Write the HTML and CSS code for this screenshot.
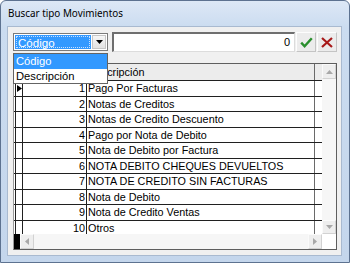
FILE: index.html
```html
<!DOCTYPE html>
<html lang="es">
<head>
<meta charset="utf-8">
<title>Buscar tipo Movimientos</title>
<link rel="stylesheet" href="styles.css">
</head>
<body>
<div class="window">
  <div class="titlebar">Buscar tipo Movimientos</div>
  <div class="client">
    <div class="toolbar">
      <div class="combo">
        <div class="combo-value"><span class="focus">Código</span></div>
        <div class="combo-btn"><svg width="7" height="4" viewBox="0 0 7 4"><path d="M0 0H7L3.5 4Z" fill="#000"/></svg></div>
      </div>
      <div class="textfield">0</div>
      <div class="btn"><svg width="13" height="11" viewBox="0 0 13 11"><path d="M1.2 5.6L4.6 9.2L11.8 1.2" fill="none" stroke="#2a8f2e" stroke-width="2.4"/></svg></div>
      <div class="btn"><svg width="12" height="11" viewBox="0 0 12 11"><path d="M1 1L11 10M11 1L1 10" fill="none" stroke="#a81a1a" stroke-width="2.2"/></svg></div>
    </div>
    <div class="grid">
      <div class="grid-body">
        <div class="data">
          <div class="row header">
            <div class="c-pad"></div><div class="c-ind"></div><div class="c-code"></div><div class="c-desc">Descripción</div><div class="c-fill"></div>
          </div>
          <div class="row"><div class="c-pad"></div><div class="c-ind"><svg width="5" height="7" viewBox="0 0 5 7"><path d="M0 0L5 3.5L0 7Z" fill="#000"/></svg></div><div class="c-code">1</div><div class="c-desc">Pago Por Facturas</div><div class="c-fill"></div></div>
          <div class="row"><div class="c-pad"></div><div class="c-ind"></div><div class="c-code">2</div><div class="c-desc">Notas de Creditos</div><div class="c-fill"></div></div>
          <div class="row"><div class="c-pad"></div><div class="c-ind"></div><div class="c-code">3</div><div class="c-desc">Notas de Credito Descuento</div><div class="c-fill"></div></div>
          <div class="row"><div class="c-pad"></div><div class="c-ind"></div><div class="c-code">4</div><div class="c-desc">Pago por Nota de Debito</div><div class="c-fill"></div></div>
          <div class="row"><div class="c-pad"></div><div class="c-ind"></div><div class="c-code">5</div><div class="c-desc">Nota de Debito por Factura</div><div class="c-fill"></div></div>
          <div class="row"><div class="c-pad"></div><div class="c-ind"></div><div class="c-code">6</div><div class="c-desc">NOTA DEBITO CHEQUES DEVUELTOS</div><div class="c-fill"></div></div>
          <div class="row"><div class="c-pad"></div><div class="c-ind"></div><div class="c-code">7</div><div class="c-desc">NOTA DE CREDITO SIN FACTURAS</div><div class="c-fill"></div></div>
          <div class="row"><div class="c-pad"></div><div class="c-ind"></div><div class="c-code">8</div><div class="c-desc">Nota de Debito</div><div class="c-fill"></div></div>
          <div class="row"><div class="c-pad"></div><div class="c-ind"></div><div class="c-code">9</div><div class="c-desc">Nota de Credito Ventas</div><div class="c-fill"></div></div>
          <div class="row"><div class="c-pad"></div><div class="c-ind"></div><div class="c-code">10</div><div class="c-desc">Otros</div><div class="c-fill"></div></div>
        </div>
        <div class="vscroll">
          <div class="sbtn"><svg width="7" height="4" viewBox="0 0 7 4"><path d="M0 4H7L3.5 0Z" fill="#a8a8a8"/></svg></div>
          <div class="strack"></div>
          <div class="sbtn"><svg width="7" height="4" viewBox="0 0 7 4"><path d="M0 0H7L3.5 4Z" fill="#a8a8a8"/></svg></div>
        </div>
      </div>
      <div class="hscroll">
        <div class="hblock"></div>
        <div class="sbtn"><svg width="4" height="7" viewBox="0 0 4 7"><path d="M4 0V7L0 3.5Z" fill="#a8a8a8"/></svg></div>
        <div class="strack"></div>
        <div class="sbtn"><svg width="4" height="7" viewBox="0 0 4 7"><path d="M0 0V7L4 3.5Z" fill="#a8a8a8"/></svg></div>
        <div class="corner"></div>
      </div>
    </div>
    <div class="dropdown">
      <div class="item selected">Código</div>
      <div class="item">Descripción</div>
    </div>
  </div>
</div>
</body>
</html>
```

FILE: styles.css
```css
html, body {
  margin: 0;
  padding: 0;
  background: #fff;
}
.window {
  box-sizing: border-box;
  width: 350px;
  height: 263px;
  border: 1px solid #5d7290;
  border-radius: 6px 6px 0 0;
  background: linear-gradient(to bottom, #dde8f6 0px, #cbdcf0 26px, #c4d6ec 100%);
  padding: 0 7px 6px 6px;
  display: flex;
  flex-direction: column;
}
.titlebar {
  height: 25px;
  flex: none;
  padding-left: 1px;
  font-family: "Noto Sans", "DejaVu Sans", sans-serif;
  font-size: 9.9px;
  line-height: 24px;
  color: #000;
}
.client {
  position: relative;
  flex: 1;
  box-sizing: border-box;
  background: #f0f0f0;
  border: 1px solid #a9bad0;
  padding: 5px 0 0 5px;
}
.toolbar {
  display: flex;
  align-items: center;
  width: 324px;
  height: 20px;
}
.combo {
  box-sizing: border-box;
  width: 95px;
  height: 18px;
  border: 1px solid #7a7a7a;
  background: #fff;
  display: flex;
  padding: 1px;
  gap: 1px;
}
.combo-value {
  flex: 1;
  background: #3399ff;
  padding: 1px;
}
.focus {
  display: block;
  height: 100%;
  box-sizing: border-box;
  border: 1px dotted #c8e0ff;
  color: #fff;
  font-family: "Liberation Sans", Arial, sans-serif;
  font-size: 11.6px;
  line-height: 11px;
  padding-left: 1px;
}
.combo-btn {
  width: 14px;
  box-sizing: border-box;
  border: 1px solid #c6c6c6;
  background: linear-gradient(#f6f6f6, #e2e2e2);
  display: flex;
  align-items: center;
  justify-content: center;
}
.textfield {
  box-sizing: border-box;
  width: 183px;
  height: 20px;
  margin-left: 4px;
  background: #fff;
  border-top: 2px solid #6f6f6f;
  border-left: 2px solid #6f6f6f;
  border-right: 1px solid #dcdcdc;
  border-bottom: 1px solid #dcdcdc;
  font-family: "Liberation Sans", Arial, sans-serif;
  font-size: 11px;
  line-height: 16px;
  text-align: right;
  padding-right: 4px;
  color: #000;
}
.btn {
  box-sizing: border-box;
  width: 20px;
  height: 20px;
  margin-left: 1px;
  background: #ececec;
  border: 1px solid #c4c4c4;
  border-top-color: #fdfdfd;
  border-left-color: #fdfdfd;
  display: flex;
  align-items: center;
  justify-content: center;
}
.grid {
  box-sizing: border-box;
  width: 324px;
  height: 187px;
  margin-top: 11px;
  border: 1px solid #5e5e5e;
  border-left-color: #9a9a9a;
  display: flex;
  flex-direction: column;
  background: #fff;
}
.grid-body {
  display: flex;
  height: 170px;
}
.data {
  width: 308px;
  overflow: hidden;
}
.row {
  display: grid;
  grid-template-columns: 1px 8px 64px 228px 7px;
  box-sizing: border-box;
  height: 15.56px;
  border-bottom: 1px solid #202020;
  font-family: "Liberation Sans", Arial, sans-serif;
  font-size: 10.8px;
  line-height: 14px;
  color: #000;
  background: #fff;
}
.row.header {
  height: 17px;
  background: #ececec;
  line-height: 16px;
}
.c-pad {
  background: #fff;
}
.c-ind {
  box-sizing: border-box;
  border-left: 1px solid #202020;
  border-right: 1px solid #202020;
  display: flex;
  align-items: center;
  padding-left: 1px;
}
.c-code {
  box-sizing: border-box;
  border-right: 1px solid #202020;
  text-align: right;
  padding-right: 1px;
  white-space: nowrap;
}
.c-desc {
  box-sizing: border-box;
  border-right: 1px solid #6a6a6a;
  padding-left: 1px;
  white-space: nowrap;
  overflow: hidden;
}
.vscroll {
  width: 14px;
  display: flex;
  flex-direction: column;
  background: #f5f5f5;
}
.sbtn {
  box-sizing: border-box;
  width: 14px;
  height: 15px;
  flex: none;
  background: #eeeeee;
  border: 1px solid #d2d2d2;
  border-top-color: #fafafa;
  border-left-color: #fafafa;
  display: flex;
  align-items: center;
  justify-content: center;
}
.vscroll .sbtn:last-child {
  height: 14px;
}
.strack {
  flex: 1;
  background: #f6f6f6;
}
.hscroll {
  display: flex;
  height: 15px;
  background: #f5f5f5;
}
.hblock {
  width: 6px;
  background: #000;
}
.corner {
  width: 14px;
  background: #fff;
}
.dropdown {
  position: absolute;
  left: 5px;
  top: 26px;
  box-sizing: border-box;
  width: 95px;
  height: 31px;
  border: 1px solid #646464;
  background: #fff;
  font-family: "Liberation Sans", Arial, sans-serif;
  font-size: 11.2px;
}
.item {
  height: 14.5px;
  line-height: 14px;
  padding-left: 2px;
  color: #000;
}
.item.selected {
  background: #3399ff;
  color: #fff;
}
```
